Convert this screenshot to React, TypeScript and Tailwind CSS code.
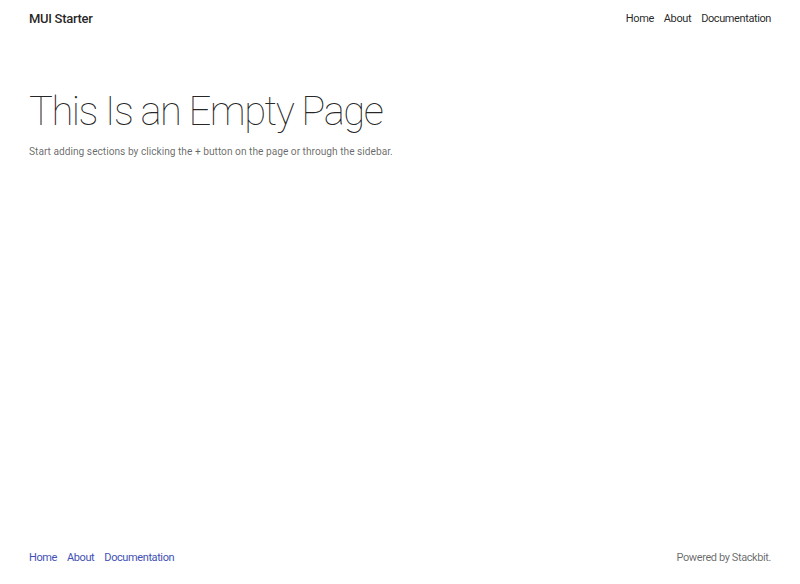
import React from "react";

const links = ["Home", "About", "Documentation"];

const App = () => {
  return (
    <div
      className="flex min-h-[584px] flex-col bg-white text-[rgba(0,0,0,0.87)]"
      style={{ fontFamily: "Roboto, 'Helvetica Neue', Arial, sans-serif" }}
    >
      <header className="flex h-[36px] items-center justify-between px-[29px]">
        <span className="text-[13px] font-medium leading-none tracking-[-0.3px]">MUI Starter</span>
        <nav className="flex gap-[10px] pt-[1px] text-[11px] leading-none tracking-[-0.4px]">
          {links.map((l) => (
            <a key={l} href="#">
              {l}
            </a>
          ))}
        </nav>
      </header>

      <main className="flex-1 px-[29px] pt-[52px]">
        <h1 className="text-[40px] font-thin leading-[1.2] tracking-[-1.5px]">
          This Is an Empty Page
        </h1>
        <p className="mt-[9px] text-[10.2px] leading-[1.43] text-[rgba(0,0,0,0.6)]">
          Start adding sections by clicking the + button on the page or through the sidebar.
        </p>
      </main>

      <footer className="flex h-[54px] items-center justify-between px-[29px] text-[11px] leading-none tracking-[-0.4px]">
        <nav className="flex gap-[10px] text-[#3f51b5]">
          {links.map((l) => (
            <a key={l} href="#">
              {l}
            </a>
          ))}
        </nav>
        <span className="text-[rgba(0,0,0,0.6)]">Powered by Stackbit.</span>
      </footer>
    </div>
  );
};

export default App;
